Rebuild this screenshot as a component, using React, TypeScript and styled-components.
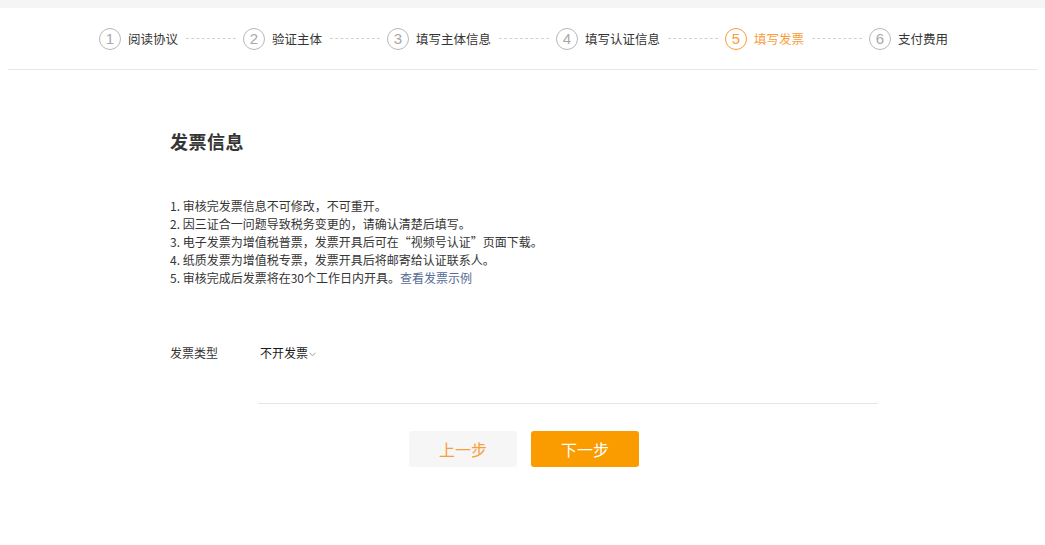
import React from "react";
import styled, { createGlobalStyle } from "styled-components";

const GlobalStyle = createGlobalStyle`
  html, body {
    margin: 0;
    padding: 0;
    background: #fff;
  }
  body {
    font-family: "Noto Sans CJK SC", "Noto Sans", "Liberation Sans", sans-serif;
    color: #353535;
    -webkit-font-smoothing: antialiased;
  }
`;

const ORANGE = "#fa9d3b";

const steps = ["阅读协议", "验证主体", "填写主体信息", "填写认证信息", "填写发票", "支付费用"];
const current = 5;

const notes = [
  "审核完发票信息不可修改，不可重开。",
  "因三证合一问题导致税务变更的，请确认清楚后填写。",
  "电子发票为增值税普票，发票开具后可在“视频号认证”页面下载。",
  "纸质发票为增值税专票，发票开具后将邮寄给认证联系人。",
];

const TopBand = styled.div`
  height: 8px;
  background: #f5f5f5;
`;

const Header = styled.div`
  margin: 0 8px;
  height: 61px;
  border-bottom: 1px solid #e7e7e7;
  display: flex;
  align-items: center;
  justify-content: center;
`;

const StepList = styled.ol`
  list-style: none;
  margin: 0;
  padding: 0 0 0 2px;
  display: flex;
  align-items: center;
`;

const StepItem = styled.li`
  display: flex;
  align-items: center;
`;

const StepNum = styled.span<{ $active?: boolean }>`
  box-sizing: border-box;
  width: 22px;
  height: 22px;
  border-radius: 50%;
  border: 1px solid ${(p) => (p.$active ? ORANGE : "#b8b8b8")};
  color: ${(p) => (p.$active ? ORANGE : "#a8a8a8")};
  font-family: "Liberation Sans", sans-serif;
  font-size: 15px;
  line-height: 20px;
  text-align: center;
`;

const StepLabel = styled.span<{ $active?: boolean }>`
  margin-left: 7px;
  font-size: 12.5px;
  line-height: 18px;
  color: ${(p) => (p.$active ? ORANGE : "#353535")};
`;

const Dash = styled.span`
  width: 50px;
  margin: 0 7px 0 8px;
  border-top: 1px dashed #d2d2d2;
`;

const Main = styled.div`
  width: 708px;
  margin: 0 auto;
  padding: 60px 0 0 3px;
`;

const Title = styled.h2`
  margin: 0;
  font-size: 18px;
  line-height: 22px;
  font-weight: 700;
  letter-spacing: 0.5px;
  color: #353535;
`;

const Notes = styled.ol`
  margin: 45px 0 0;
  padding: 0;
  list-style: none;
  font-size: 12px;
  line-height: 18px;
  color: #353535;
`;

const NoteLink = styled.a`
  color: #576b95;
  text-decoration: none;
  cursor: pointer;
`;

const FormRow = styled.div`
  margin-top: 57px;
  display: flex;
  align-items: flex-start;
`;

const FieldLabel = styled.label`
  width: 88px;
  font-size: 12px;
  line-height: 18px;
  color: #353535;
`;

const FieldBox = styled.div`
  flex: 1;
  height: 60px;
  box-sizing: border-box;
  border-bottom: 1px solid #e5e5e5;
  padding-left: 2px;
`;

const Select = styled.button`
  display: flex;
  align-items: center;
  height: 18px;
  padding: 0;
  border: 0;
  background: none;
  font-family: inherit;
  font-size: 12px;
  line-height: 18px;
  color: #1a1a1a;
  cursor: pointer;
  svg {
    margin-left: 1px;
    margin-top: 2px;
  }
`;

const Actions = styled.div`
  margin-top: 27px;
  display: flex;
  justify-content: center;
  gap: 14px;
`;

const Button = styled.button<{ $primary?: boolean }>`
  width: 108px;
  height: 36px;
  border: 0;
  border-radius: 3px;
  font-family: inherit;
  font-size: 16px;
  font-weight: 400;
  background: ${(p) => (p.$primary ? "#fa9b00" : "#f6f6f6")};
  color: ${(p) => (p.$primary ? "#fff" : ORANGE)};
  cursor: pointer;
`;

const Chevron = () => (
  <svg width="7" height="5" viewBox="0 0 7 5" fill="none">
    <polyline points="0.5,0.8 3.5,3.8 6.5,0.8" stroke="#9a9a9a" strokeWidth="1" />
  </svg>
);

export default function App() {
  return (
    <>
      <GlobalStyle />
      <TopBand />
      <Header>
        <StepList>
          {steps.map((s, i) => (
            <StepItem key={s}>
              <StepNum $active={i + 1 === current}>{i + 1}</StepNum>
              <StepLabel $active={i + 1 === current}>{s}</StepLabel>
              {i < steps.length - 1 && <Dash />}
            </StepItem>
          ))}
        </StepList>
      </Header>
      <Main>
        <Title>发票信息</Title>
        <Notes>
          {notes.map((n, i) => (
            <li key={i}>
              {i + 1}. {n}
            </li>
          ))}
          <li>
            5. 审核完成后发票将在30个工作日内开具。<NoteLink>查看发票示例</NoteLink>
          </li>
        </Notes>
        <FormRow>
          <FieldLabel>发票类型</FieldLabel>
          <FieldBox>
            <Select>
              不开发票
              <Chevron />
            </Select>
          </FieldBox>
        </FormRow>
        <Actions>
          <Button>上一步</Button>
          <Button $primary>下一步</Button>
        </Actions>
      </Main>
    </>
  );
}
